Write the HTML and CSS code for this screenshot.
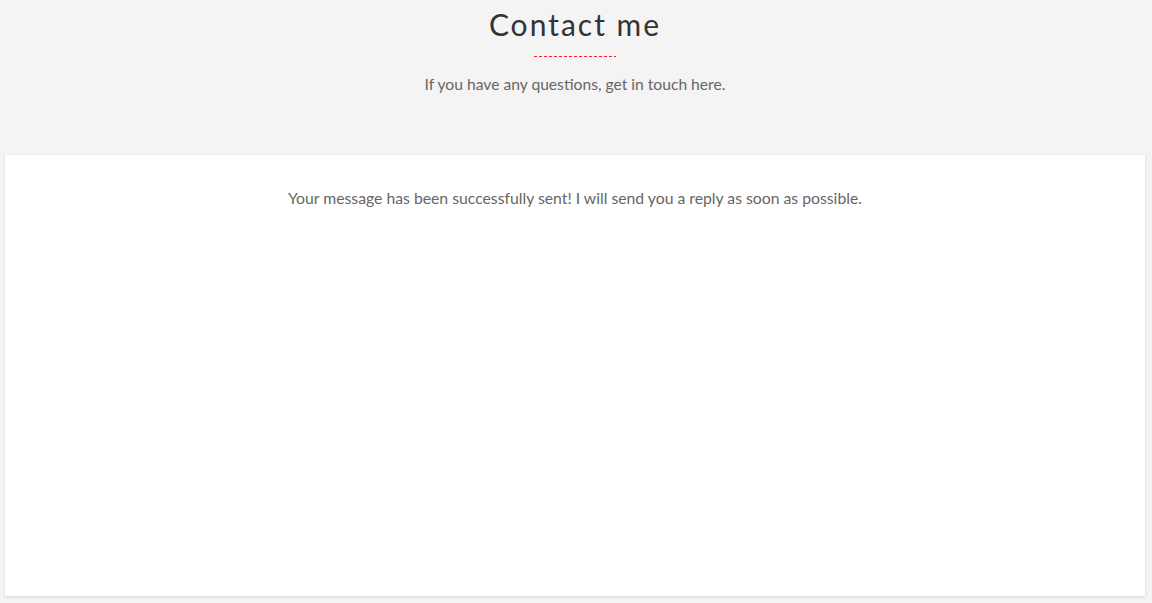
FILE: index.html
```html
<!DOCTYPE html>
<html>
<head>
<meta charset="utf-8">
<link rel="stylesheet" href="styles.css">
</head>
<body>
<header class="head">
  <h1 class="title">Contact me</h1>
  <div class="rule"></div>
  <p class="sub">If you have any questions, get in touch here.</p>
</header>
<main class="card">
  <p class="msg">Your message has been successfully sent! I will send you a reply as soon as possible.</p>
</main>
</body>
</html>
```
FILE: styles.css
```css
html, body { margin: 0; padding: 0; }
body {
  background: #f4f4f4;
  font-family: Lato, "Open Sans", sans-serif;
  color: #333;
  padding: 0 7px 0 5px;
  height: 603px;
  box-sizing: border-box;
  overflow: hidden;
}
.head {
  display: flex;
  flex-direction: column;
  align-items: center;
  padding-top: 5px;
  height: 155px;
  box-sizing: border-box;
}
.title {
  margin: 0;
  font-size: 30px;
  font-weight: 400;
  letter-spacing: 2px;
  line-height: 38px;
  color: #333;
}
.rule {
  width: 82px;
  height: 1px;
  background: repeating-linear-gradient(90deg, #f22 0 3px, transparent 3px 5px);
  margin-top: 13px;
}
.sub {
  margin: 18px 0 0;
  font-size: 15.65px;
  color: #666;
}
.card {
  background: #fff;
  height: 441px;
  box-shadow: 0 1px 3px rgba(0,0,0,0.12);
  padding-top: 33px;
  box-sizing: border-box;
}
.msg {
  margin: 0;
  text-align: center;
  font-size: 15.75px;
  color: #666;
}
```
